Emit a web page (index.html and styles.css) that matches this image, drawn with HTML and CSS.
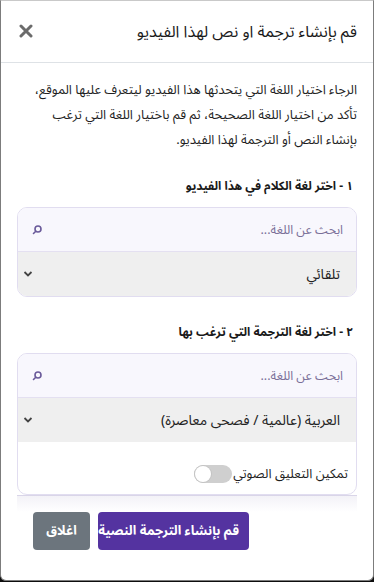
FILE: index.html
```html
<!DOCTYPE html>
<html lang="ar" dir="rtl">
<head>
	<meta charset="utf-8">
	<title>إنشاء ترجمة</title>
	<link rel="stylesheet" href="styles.css">
</head>
<body>
	<div class="modal">
		<div class="modal-header">
			<h5 class="modal-title">قم بإنشاء ترجمة او نص لهذا الفيديو</h5>
			<button class="close-btn" aria-label="اغلاق">
				<svg width="14" height="14" viewBox="0 0 14 14"><path d="M2 2 L12 12 M12 2 L2 12" stroke="#6b6b6b" stroke-width="3" stroke-linecap="round"/></svg>
			</button>
		</div>

		<div class="modal-body">
			<p class="intro">الرجاء اختيار اللغة التي يتحدثها هذا الفيديو ليتعرف عليها الموقع، تأكد من اختيار اللغة الصحيحة، ثم قم باختيار اللغة التي ترغب بإنشاء النص أو الترجمة لهذا الفيديو.</p>

			<h6 class="step-title">١ - اختر لغة الكلام في هذا الفيديو</h6>
			<div class="lang-box">
				<div class="lang-search">
					<span class="placeholder">ابحث عن اللغة...</span>
					<svg class="search-icon" width="10" height="10" viewBox="0 0 10 10"><circle cx="6" cy="4" r="3" fill="none" stroke="#6a5a9a" stroke-width="1.6"/><path d="M3.8 6.2 L1.5 8.5" stroke="#6a5a9a" stroke-width="1.6" stroke-linecap="round"/></svg>
				</div>
				<div class="lang-select">
					<span>تلقائي</span>
					<svg class="chevron" width="10" height="8" viewBox="0 0 10 8"><path d="M1.5 2 L5 5.5 L8.5 2" fill="none" stroke="#444" stroke-width="1.8"/></svg>
				</div>
			</div>

			<h6 class="step-title">٢ - اختر لغة الترجمة التي ترغب بها</h6>
			<div class="lang-box lang-box-last">
				<div class="lang-search">
					<span class="placeholder">ابحث عن اللغة...</span>
					<svg class="search-icon" width="10" height="10" viewBox="0 0 10 10"><circle cx="6" cy="4" r="3" fill="none" stroke="#6a5a9a" stroke-width="1.6"/><path d="M3.8 6.2 L1.5 8.5" stroke="#6a5a9a" stroke-width="1.6" stroke-linecap="round"/></svg>
				</div>
				<div class="lang-select">
					<span>العربية (عالمية / فصحى معاصرة)</span>
					<svg class="chevron" width="10" height="8" viewBox="0 0 10 8"><path d="M1.5 2 L5 5.5 L8.5 2" fill="none" stroke="#444" stroke-width="1.8"/></svg>
				</div>
				<label class="voice-row">
					<span>تمكين التعليق الصوتي</span>
					<span class="switch"><span class="knob"></span></span>
				</label>
			</div>
			<div class="scroll-edge"></div>
		</div>

		<div class="modal-footer">
			<button class="btn btn-primary">قم بإنشاء الترجمة النصية</button>
			<button class="btn btn-secondary">اغلاق</button>
		</div>
	</div>
</body>
</html>
```

FILE: styles.css
```css
html, body {
	margin: 0;
	height: 100%;
	background-color: #0d0d0d;
}
body {
	font-family: "Noto Sans Arabic", "DejaVu Sans Condensed", "DejaVu Sans", sans-serif;
	color: #212529;
}
.modal {
	box-sizing: border-box;
	width: 374px;
	height: 581px;
	background-color: #fff;
	border: 1px solid #7c7c7c;
	border-top-color: #c9c9c9;
	border-radius: 0 0 6px 6px;
	display: flex;
	flex-direction: column;
	overflow: hidden;
}

.modal-header {
	display: flex;
	align-items: center;
	justify-content: space-between;
	flex: 0 0 62px;
	box-sizing: border-box;
	padding: 0 16px 0 18px;
	border-bottom: 1px solid #dee2e6;
}
.modal-title {
	margin: 0;
	font-size: 16px;
	font-weight: normal;
	color: #1a1a1a;
}
.close-btn {
	background: none;
	border: 0;
	padding: 0;
	margin-top: -1px;
	display: flex;
}

.modal-body {
	padding: 15px 16px 0;
}
.intro {
	margin: 0 0 24px 9px;
	height: 75px;
	font-size: 13px;
	line-height: 25px;
	color: #1f1f1f;
}
.step-title {
	margin: 0 0 10px;
	padding-right: 4px;
	height: 20px;
	font-size: 12px;
	line-height: 20px;
	font-weight: bold;
	color: #1a1a1a;
}
.lang-box {
	border: 1px solid #e1ddf0;
	border-radius: 10px;
	overflow: hidden;
	margin-bottom: 26px;
}
.lang-box-last {
	margin-bottom: 0;
}
.lang-search, .lang-select {
	display: flex;
	align-items: center;
	justify-content: space-between;
	box-sizing: border-box;
	padding: 0 13px 0 0;
	font-size: 14px;
}
.lang-search {
	height: 44px;
	background-color: #f8f7fd;
	border-bottom: 1px solid #e4e0f1;
}
.placeholder {
	color: #7a6f98;
	font-size: 12.5px;
}
.search-icon {
	margin-left: 14px;
}
.lang-select {
	background-color: #efefef;
	height: 44px;
	padding-right: 16px;
	color: #222;
}
.chevron {
	margin-left: 5px;
}
.voice-row {
	display: flex;
	align-items: center;
	padding: 22px 8px 10px;
	height: 20px;
	font-size: 13px;
	color: #1f1f1f;
}
.switch {
	width: 38px;
	height: 18px;
	border-radius: 9px;
	background-color: #cfcfcf;
	display: flex;
	justify-content: flex-end;
	align-items: center;
	margin-right: 1px;
}
.knob {
	width: 16px;
	height: 16px;
	border-radius: 50%;
	background-color: #fff;
	margin-left: 1px;
	box-shadow: 0 0 0 1px #c4c4c4;
}
.scroll-edge {
	height: 16px;
	border-top: 1px solid #d9d5e8;
	background: linear-gradient(#f3f2f7, #fff);
}

.modal-footer {
	display: flex;
	justify-content: flex-end;
	gap: 8px;
	padding: 0 32px;
}
.btn {
	font-family: inherit;
	font-size: 13px;
	font-weight: bold;
	color: #fff;
	border: 0;
	border-radius: 4px;
	height: 38px;
	padding: 0 10px;
	white-space: nowrap;
}
.btn-primary {
	background-color: #5433a0;
	width: 151px;
}
.btn-secondary {
	background-color: #6c757d;
	width: 57px;
}
```
